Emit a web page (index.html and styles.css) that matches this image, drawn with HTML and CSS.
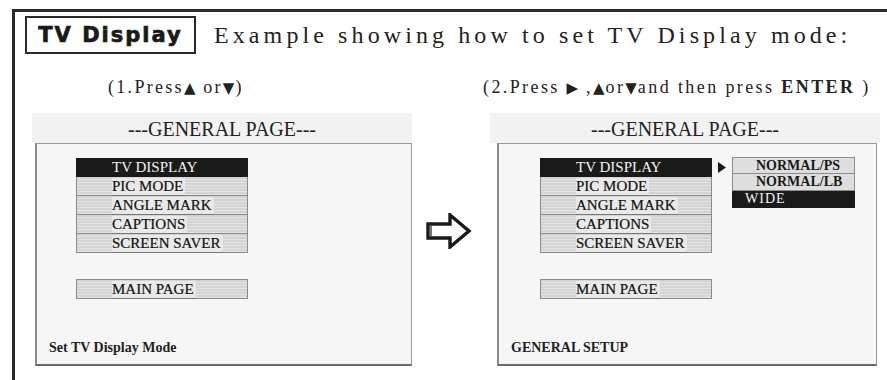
FILE: index.html
```html
<!DOCTYPE html>
<html>
<head>
<meta charset="utf-8">
<link rel="stylesheet" href="styles.css">
</head>
<body>
<div class="frame">
  <div class="title-row">
    <div class="title-box">TV Display</div>
    <div class="title-text">Example showing how to set TV Display mode:</div>
  </div>
  <div class="captions">
    <div class="cap cap1">(1.Press<span class="tri">▲</span> or<span class="tri">▼</span>)</div>
    <div class="cap cap2">(2.Press <span class="tri">▶</span> ,<span class="tri">▲</span>or<span class="tri">▼</span>and then press <b>ENTER</b> )</div>
  </div>
  <div class="panels">
    <div class="panel">
      <div class="panel-head">---GENERAL PAGE---</div>
      <div class="panel-body body-left">
        <div class="menu-area">
          <div class="menu">
            <div class="row sel"><span>TV DISPLAY</span></div>
            <div class="row"><span>PIC MODE</span></div>
            <div class="row"><span>ANGLE MARK</span></div>
            <div class="row"><span>CAPTIONS</span></div>
            <div class="row"><span>SCREEN SAVER</span></div>
            <div class="row main"><span>MAIN PAGE</span></div>
          </div>
        </div>
        <div class="status">Set TV Display Mode</div>
      </div>
    </div>
    <div class="arrow-col">
      <svg class="big-arrow" width="46" height="36" viewBox="0 0 46 36">
        <polygon points="2,11 24,11 24,2 43,18 24,34 24,25 2,25" fill="#fff" stroke="#1a1a1a" stroke-width="3.4" stroke-linejoin="miter"/>
        <line x1="5" y1="13" x2="5" y2="23" stroke="#1a1a1a" stroke-width="1.2"/>
      </svg>
    </div>
    <div class="panel panel-right">
      <div class="panel-head">---GENERAL PAGE---</div>
      <div class="panel-body body-right">
        <div class="menu-area">
          <div class="menu">
            <div class="row sel"><span>TV DISPLAY</span></div>
            <div class="row"><span>PIC MODE</span></div>
            <div class="row"><span>ANGLE MARK</span></div>
            <div class="row"><span>CAPTIONS</span></div>
            <div class="row"><span>SCREEN SAVER</span></div>
            <div class="row main"><span>MAIN PAGE</span></div>
          </div>
          <svg class="pointer" width="8" height="11" viewBox="0 0 8 11">
            <polygon points="0,0 8,5.5 0,11" fill="#1a1a1a"/>
          </svg>
          <div class="submenu">
            <div class="sub">NORMAL/PS</div>
            <div class="sub">NORMAL/LB</div>
            <div class="sub sub-sel">WIDE</div>
          </div>
        </div>
        <div class="status">GENERAL SETUP</div>
      </div>
    </div>
  </div>
</div>
</body>
</html>
```

FILE: styles.css
```css
html, body {
  margin: 0;
  padding: 0;
  background: #fff;
  color: #1e1e1e;
  font-family: "Liberation Serif", "Times New Roman", serif;
}
.frame {
  margin: 9px 0 0 12px;
  border-top: 3px solid #2a2a2a;
  border-left: 3px solid #2a2a2a;
  height: 371px;
  box-sizing: border-box;
  padding: 4px 0 0 10px;
}
.title-row {
  display: flex;
  align-items: center;
  height: 38px;
}
.title-box {
  box-sizing: border-box;
  width: 171px;
  height: 38px;
  border: 2px solid #2a2a2a;
  font-family: "DejaVu Sans", sans-serif;
  font-weight: bold;
  font-size: 21px;
  letter-spacing: 2px;
  -webkit-text-stroke: 0.7px #1a1a1a;
  display: flex;
  align-items: center;
  justify-content: center;
  color: #1a1a1a;
}
.title-text {
  margin-left: 18px;
  font-size: 24px;
  letter-spacing: 4.1px;
  color: #222;
}
.captions {
  display: grid;
  grid-template-columns: 468px 1fr;
  margin-top: 23px;
  margin-left: -10px;
  height: 20px;
}
.cap {
  font-size: 18px;
  line-height: 20px;
  letter-spacing: 2.3px;
  color: #222;
}
.cap1 { padding-left: 93px; }
.cap2 { letter-spacing: 2.4px; }
.tri {
  font-family: "DejaVu Sans", sans-serif;
  font-size: 15px;
  letter-spacing: 1px;
}
.panels {
  display: grid;
  grid-template-columns: 380px 78px 390px;
  margin-top: 16px;
  margin-left: 7px;
}
.panel-head {
  height: 30px;
  background: #f2f2f2;
  text-align: center;
  font-size: 20px;
  line-height: 32px;
  color: #222;
}
.panel-body {
  box-sizing: border-box;
  height: 223px;
  background: #f6f6f6;
  border: 1px solid #9a9a9a;
  border-bottom: 2px solid #6a6a6a;
  border-left: 2px solid #8a8a8a;
  display: flex;
  flex-direction: column;
  justify-content: space-between;
}
.body-left { margin-left: 3px; }
.body-right { margin: 0 3px 0 7px; }
.menu-area {
  display: flex;
  align-items: flex-start;
  padding: 14px 0 0 39px;
}
.body-right .menu-area { padding-left: 41px; }
.menu {
  width: 172px;
}
.row {
  box-sizing: border-box;
  height: 19px;
  background: repeating-linear-gradient(#d4d4d4 0, #d4d4d4 2px, #e2e2e2 2px, #e2e2e2 3px);
  border-left: 1px solid #8c8c8c;
  border-right: 1px solid #8c8c8c;
  border-bottom: 1px solid #8c8c8c;
  padding-left: 35px;
  font-size: 15px;
  line-height: 19px;
  color: #111;
}
.row span {
  display: inline-block;
  background: #e9e9e9;
  line-height: 17px;
  padding-right: 2px;
  border-bottom: 1px solid #777;
  -webkit-text-stroke: 0.2px #111;
}
.row.sel {
  background: #1a1a1a;
  border-color: #1a1a1a;
  color: #f2f2f2;
}
.row.sel span {
  background: transparent;
  border-bottom: none;
  color: #f2f2f2;
  -webkit-text-stroke: 0;
}
.row.main {
  margin-top: 26px;
  height: 20px;
  border-top: 1px solid #8c8c8c;
}
.pointer {
  display: block;
  margin: 4px 6px 0 6px;
  flex: none;
}
.submenu {
  width: 123px;
  margin-top: -1px;
}
.sub {
  box-sizing: border-box;
  height: 17px;
  background: #dedede;
  border: 1px solid #8c8c8c;
  border-top: none;
  font-size: 14px;
  font-weight: bold;
  line-height: 16px;
  padding-left: 23px;
  color: #1a1a1a;
}
.sub:first-child { border-top: 1px solid #8c8c8c; }
.sub.sub-sel {
  background: #1a1a1a;
  border-color: #1a1a1a;
  color: #f2f2f2;
  font-weight: normal;
  padding-left: 12px;
  letter-spacing: 1px;
}
.status {
  font-size: 14px;
  font-weight: bold;
  padding: 0 0 8px 12px;
  color: #1e1e1e;
}
.arrow-col {
  display: flex;
  justify-content: center;
  padding-top: 100px;
  padding-right: 4px;
}
.big-arrow { display: block; }
```
